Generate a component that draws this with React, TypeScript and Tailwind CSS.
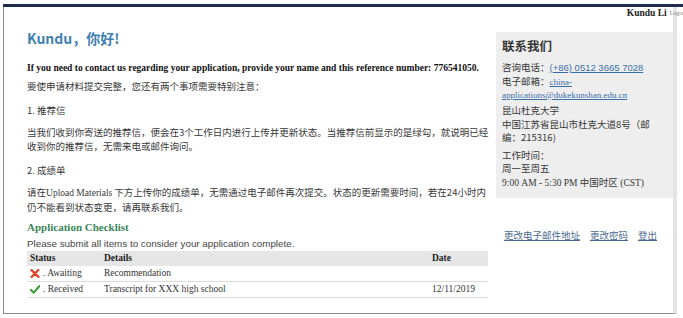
const serif = "font-['Liberation_Serif','Noto_Sans_CJK_SC',serif]";
const cjk = "font-['Noto_Sans_CJK_SC','Liberation_Sans',sans-serif]";

const CrossIcon = () => (
  <svg width="10" height="9" viewBox="0 0 10 9" className="shrink-0">
    <path d="M1.5 1.2 L8.5 7.8 M8.3 1 L1.6 8" stroke="#e0452b" strokeWidth="2.4" strokeLinecap="round" />
  </svg>
);

const CheckIcon = () => (
  <svg width="10" height="9" viewBox="0 0 10 9" className="shrink-0">
    <path d="M1 5 L3.8 7.6 L9.2 1.2" stroke="#3e9e3a" strokeWidth="2.2" fill="none" strokeLinecap="round" strokeLinejoin="round" />
  </svg>
);

const rows = [
  { ok: false, status: "Awaiting", details: "Recommendation", date: "" },
  { ok: true, status: "Received", details: "Transcript for XXX high school", date: "12/11/2019" },
];

export default function App() {
  return (
    <div className="w-[683px] h-[318px] bg-white overflow-hidden pt-[4px] pl-[3px] text-[#383838]">
      <div className="h-[3px] bg-[#1d2b4f]" />
      <div className="w-[674px] h-[307px] flex flex-col border-l border-l-[#8c8c8c] border-b border-b-[#8c8c8c] border-r-[4px] border-r-[#e4e4e4]">
        <div className="h-[12px] flex justify-end items-center -mr-[14px] whitespace-nowrap">
          <span className={`${serif} text-[9.5px] font-bold text-[#222]`}>Kundu Li</span>
          <span className={`${serif} text-[6px] text-[#777] ml-[3px]`}>Logout</span>
        </div>

        <div className="flex">
          <div className="w-[488px] pl-[23px]">
            <h1 className={`${cjk} mt-[9px] text-[14px] leading-[20px] font-bold text-[#3f7fb3]`}>
              Kundu，你好!
            </h1>
            <p className={`${serif} mt-[13px] text-[9.5px] leading-[14px] font-bold text-[#111] whitespace-nowrap`}>
              If you need to contact us regarding your application, provide your name and this reference number: 776541050.
            </p>
            <p className={`${cjk} mt-[4px] text-[9.5px] leading-[14px]`}>
              要使申请材料提交完整，您还有两个事项需要特别注意：
            </p>
            <p className={`${cjk} mt-[10px] text-[9.5px] leading-[14px]`}>1. 推荐信</p>
            <p className={`${cjk} mt-[8px] text-[9.5px] leading-[14px]`}>
              当我们收到你寄送的推荐信，便会在3个工作日内进行上传并更新状态。当推荐信前显示的是绿勾，就说明已经收到你的推荐信，无需来电或邮件询问。
            </p>
            <p className={`${cjk} mt-[10px] text-[9.5px] leading-[14px]`}>2. 成绩单</p>
            <p className={`${cjk} mt-[8px] text-[9.5px] leading-[14px] w-[463px]`}>
              请在<span className={serif}>Upload Materials</span> 下方上传你的成绩单，无需通过电子邮件再次提交。状态的更新需要时间，若在24小时内仍不能看到状态变更，请再联系我们。
            </p>
            <h2 className={`${serif} mt-[6px] text-[11px] leading-[14px] font-bold text-[#3a8559]`}>
              Application Checklist
            </h2>
            <p className="font-['Liberation_Sans',sans-serif] mt-[3px] text-[9.8px] leading-[14px] text-[#444]">
              Please submit all items to consider your application complete.
            </p>
            <div className={`${serif} w-[461px] text-[9.5px] text-[#333]`}>
              <div className="flex h-[15px] items-center bg-[#e6e6e6] font-bold text-[#222]">
                <span className="w-[74px] pl-[3px]">Status</span>
                <span className="w-[330px] pl-[3px]">Details</span>
                <span className="pl-[1px]">Date</span>
              </div>
              {rows.map((r) => (
                <div key={r.status} className="flex h-[16px] items-center border-b border-b-[#dcdcdc]">
                  <span className="w-[74px] pl-[3px] flex items-center gap-[3px]">
                    {r.ok ? <CheckIcon /> : <CrossIcon />}
                    <span>. {r.status}</span>
                  </span>
                  <span className="w-[330px] pl-[3px]">{r.details}</span>
                  <span className="pl-[1px]">{r.date}</span>
                </div>
              ))}
            </div>
          </div>

          <div className="w-[177px] ml-[4px]">
            <div className="mt-[13px] bg-[#eeeeee] pl-[6px] pr-[4px] pt-[6px] pb-[8px] text-[9.5px]">
              <h3 className={`${cjk} text-[12.5px] leading-[16px] font-bold text-[#333]`}>联系我们</h3>
              <p className={`${cjk} mt-[6px] leading-[14px]`}>
                咨询电话：
                <span className="font-['Liberation_Sans',sans-serif] text-[#3a6ea8] underline">(+86) 0512 3665 7028</span>
              </p>
              <p className={`${cjk} leading-[13px]`}>
                电子邮箱：
                <span className={`${serif} text-[9px] text-[#3a6ea8] underline`}>china-</span>
              </p>
              <p className={`${serif} leading-[12px] text-[9px] text-[#3a6ea8] underline`}>
                applications@dukekunshan.edu.cn
              </p>
              <p className={`${cjk} mt-[3px] leading-[13.5px]`}>
                昆山杜克大学
                <br />
                中国江苏省昆山市杜克大道8号（邮
                <br />
                编：215316)
              </p>
              <p className={`${cjk} mt-[4px] leading-[13.5px]`}>
                工作时间：
                <br />
                周一至周五
                <br />
                <span className={serif}>9:00 AM - 5:30 PM </span>中国时区<span className={serif}> (CST)</span>
              </p>
            </div>
            <div className={`${cjk} mt-[30px] pl-[8px] flex gap-[10px] text-[9.5px] leading-[14px] text-[#4a6a92]`}>
              <span className="underline">更改电子邮件地址</span>
              <span className="underline">更改密码</span>
              <span className="underline">登出</span>
            </div>
          </div>
        </div>
      </div>
    </div>
  );
}
